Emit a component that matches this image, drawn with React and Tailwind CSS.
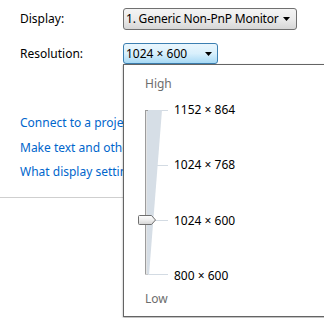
import React from "react";

function Arrow() {
  return (
    <svg width="7" height="4" viewBox="0 0 7 4" className="block">
      <path d="M0 0 H7 L3.5 4 Z" fill="#000" />
    </svg>
  );
}

function SliderArt() {
  return (
    <svg width="38" height="181" viewBox="0 0 38 181" className="block shrink-0">
      <defs>
        <linearGradient id="thumb" x1="0" y1="0" x2="0" y2="1">
          <stop offset="0" stopColor="#ffffff" />
          <stop offset="0.5" stopColor="#eeeeee" />
          <stop offset="1" stopColor="#d4d4d4" />
        </linearGradient>
      </defs>
      <line x1="11" y1="8.5" x2="32" y2="8.5" stroke="#d3dbe3" />
      <line x1="11" y1="63.5" x2="32" y2="63.5" stroke="#d3dbe3" />
      <line x1="11" y1="118.5" x2="32" y2="118.5" stroke="#d3dbe3" />
      <line x1="11" y1="172.5" x2="32" y2="172.5" stroke="#d3dbe3" />
      <polygon points="11,8 26,8 13,173 11,173" fill="#d6dee6" />
      <line x1="9.5" y1="8" x2="9.5" y2="173" stroke="#9c9c9c" />
      <line x1="10.5" y1="8" x2="10.5" y2="173" stroke="#e4e4e4" />
      <line x1="9" y1="8.5" x2="12" y2="8.5" stroke="#9c9c9c" />
      <line x1="9" y1="172.5" x2="12" y2="172.5" stroke="#c8c8c8" />
      <path
        d="M3.5 113.5 H15.5 L19.5 118 L15.5 122.5 H3.5 Q2.5 122.5 2.5 121.5 V114.5 Q2.5 113.5 3.5 113.5 Z"
        fill="url(#thumb)"
        stroke="#6f6f6f"
      />
    </svg>
  );
}

export default function App() {
  const font = { fontFamily: '"Noto Sans", "Liberation Sans", sans-serif' };
  return (
    <div
      className="relative w-[324px] h-[318px] bg-white overflow-hidden text-[12px] leading-[16px] text-black"
      style={font}
    >
      <div className="flex flex-col">
        <div className="flex items-center pt-[8px] pl-[20px]">
          <div className="w-[103px]">Display:</div>
          <div className="flex items-center justify-between w-[174px] h-[22px] rounded-[3px] border border-[#707070] bg-gradient-to-b from-[#f4f4f4] via-[#ebebeb] to-[#d6d6d6] pl-[2px] pr-[6px]">
            <span className="tracking-[-0.2px]">1. Generic Non-PnP Monitor</span>
            <Arrow />
          </div>
        </div>
        <div className="flex items-center pt-[13px] pl-[20px]">
          <div className="w-[103px]">Resolution:</div>
          <div className="flex items-center justify-between w-[95px] h-[21px] rounded-[3px] border border-[#3c7fb1] bg-gradient-to-b from-[#eaf6fd] via-[#d9f0fc] to-[#a7d9f5] pl-[2px] pr-[5px]">
            <span>1024 × 600</span>
            <Arrow />
          </div>
        </div>
        <div className="w-[123px] overflow-hidden flex flex-col gap-[8.5px] pt-[51px] pl-[20px] text-[#0066cc]">
          <div className="whitespace-nowrap">Connect to a projector</div>
          <div className="whitespace-nowrap">Make text and other items larger or smaller</div>
          <div className="whitespace-nowrap">What display settings should I choose?</div>
        </div>
        <div className="mt-[17px] border-t border-[#cfcfcf]" />
      </div>

      <div className="absolute left-[123px] top-[64px] w-[220px] h-[253px] border border-[#646464] bg-white shadow-[0_1px_2px_rgba(0,0,0,0.35)] flex flex-col pl-[21px]">
        <div className="pt-[11px] text-[#6d6d6d]">High</div>
        <div className="flex mt-[10px] -ml-[9px]">
          <SliderArt />
          <div className="flex flex-col justify-between h-[182px]">
            <div className="h-[16px]">1152 × 864</div>
            <div className="h-[16px]">1024 × 768</div>
            <div className="h-[16px]">1024 × 600</div>
            <div className="h-[16px]">800 × 600</div>
          </div>
        </div>
        <div className="mt-[7px] text-[#6d6d6d]">Low</div>
      </div>
    </div>
  );
}
